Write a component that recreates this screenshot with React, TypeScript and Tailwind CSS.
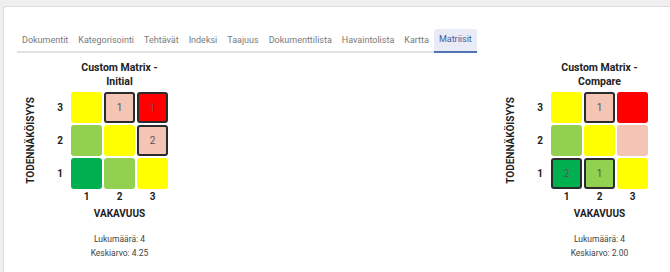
const FONT = { fontFamily: "Roboto, 'Noto Sans', sans-serif" };

const TABS = [
  "Dokumentit",
  "Kategorisointi",
  "Tehtävät",
  "Indeksi",
  "Taajuus",
  "Dokumenttilista",
  "Havaintolista",
  "Kartta",
  "Matriisit",
];

const COLORS: Record<string, string> = {
  y: "bg-[#ffff00]",
  lg: "bg-[#92d050]",
  dg: "bg-[#00b050]",
  r: "bg-[#ff0000]",
  p: "bg-[#f4c4b4]",
};

interface Cell {
  c: string;
  n?: number;
}

interface Matrix {
  title: string;
  rows: Cell[][];
  count: number;
  avg: string;
}

const MATRICES: Matrix[] = [
  {
    title: "Custom Matrix - Initial",
    rows: [
      [{ c: "y" }, { c: "p", n: 1 }, { c: "r", n: 1 }],
      [{ c: "lg" }, { c: "y" }, { c: "p", n: 2 }],
      [{ c: "dg" }, { c: "lg" }, { c: "y" }],
    ],
    count: 4,
    avg: "4.25",
  },
  {
    title: "Custom Matrix - Compare",
    rows: [
      [{ c: "y" }, { c: "p", n: 1 }, { c: "r" }],
      [{ c: "lg" }, { c: "y" }, { c: "p" }],
      [{ c: "dg", n: 2 }, { c: "lg", n: 1 }, { c: "y" }],
    ],
    count: 4,
    avg: "2.00",
  },
];

function MatrixBlock({ m }: { m: Matrix }) {
  return (
    <div className="flex items-start">
      {/* y-axis title + row labels */}
      <div className="mt-[31px] flex">
        <div className="flex h-[97px] w-[12px] items-center justify-center">
          <span className="rotate-180 whitespace-nowrap text-[10px] font-bold leading-[12px] text-[#222] [writing-mode:vertical-rl]">
            TODENNÄKÖISYYS
          </span>
        </div>
        <div className="ml-[18px] flex w-[10px] flex-col gap-[2px]">
          {[3, 2, 1].map((n) => (
            <div
              key={n}
              className="flex h-[31px] items-center justify-center text-[10px] font-bold text-[#222]"
            >
              {n}
            </div>
          ))}
        </div>
      </div>

      <div className="ml-[6px] flex w-[97px] flex-col items-center">
        <div className="text-center text-[10.5px] font-bold leading-[14px] text-[#222]">
          {m.title}
        </div>
        <div className="mt-[3px] grid grid-cols-3 gap-[2px]">
          {m.rows.flat().map((cell, i) => (
            <div
              key={i}
              className={`flex h-[31px] w-[31px] items-center justify-center rounded-[3px] text-[10px] text-[#555] ${
                COLORS[cell.c]
              } ${cell.n ? "border-2 border-[#2b2b2b]" : ""}`}
            >
              {cell.n ?? ""}
            </div>
          ))}
        </div>
        <div className="mt-[2px] grid w-full grid-cols-3 gap-[2px] text-center text-[10px] font-bold leading-[12px] text-[#222]">
          <span>1</span>
          <span>2</span>
          <span>3</span>
        </div>
        <div className="mt-[5px] text-[10px] font-bold leading-[12px] text-[#222]">
          VAKAVUUS
        </div>
        <div className="mt-[12px] flex flex-col items-center text-[8.5px] leading-[14px] text-[#444]">
          <span>Lukumäärä: {m.count}</span>
          <span>Keskiarvo: {m.avg}</span>
        </div>
      </div>
    </div>
  );
}

export default function App() {
  return (
    <div className="h-[272px] w-[670px] overflow-hidden bg-[#efefef]" style={FONT}>
      <div className="ml-[3px] mt-[6px] h-[290px] rounded-tl-[4px] border-l border-t border-[#dcdcdc] bg-white pl-[13px] pr-[22px] pt-[19px]">
        <div className="inline-flex border-b-2 border-[#e2e2e2]">
          {TABS.map((t) => {
            const active = t === "Matriisit";
            return (
              <div
                key={t}
                className={`-mb-[2px] flex h-[24px] items-center px-[5px] text-[9px] ${
                  active
                    ? "rounded-t-[3px] border-b-2 border-[#5473b3] bg-[#e9ecf6] text-[#3d5a9e]"
                    : "text-[#7a7a7a]"
                }`}
              >
                {t}
              </div>
            );
          })}
        </div>

        <div className="mt-[8px] flex justify-between pl-[8px]">
          {MATRICES.map((m) => (
            <MatrixBlock key={m.title} m={m} />
          ))}
        </div>
      </div>
    </div>
  );
}
